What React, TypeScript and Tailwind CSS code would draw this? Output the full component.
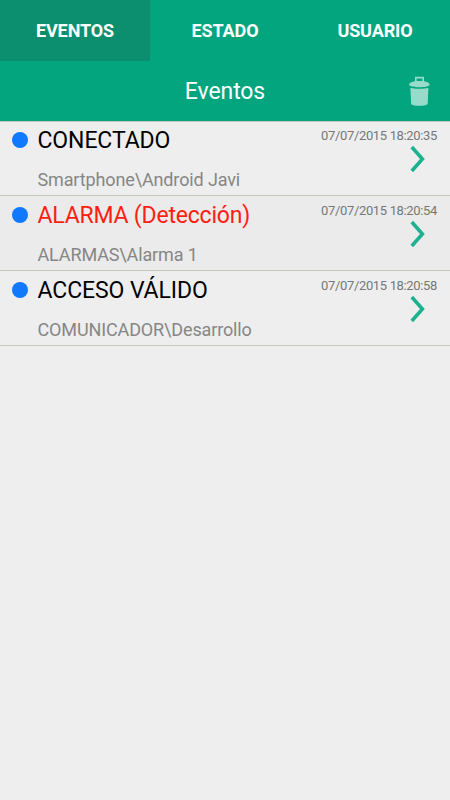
import { clsx } from 'clsx';

type TEvent = {
  title: string;
  source: string;
  date: string;
  isAlarm?: boolean;
};

const TABS = ['EVENTOS', 'ESTADO', 'USUARIO'];

const EVENTS: TEvent[] = [
  {
    title: 'CONECTADO',
    source: 'Smartphone\\Android Javi',
    date: '07/07/2015 18:20:35',
  },
  {
    title: 'ALARMA (Detección)',
    source: 'ALARMAS\\Alarma 1',
    date: '07/07/2015 18:20:54',
    isAlarm: true,
  },
  {
    title: 'ACCESO VÁLIDO',
    source: 'COMUNICADOR\\Desarrollo',
    date: '07/07/2015 18:20:58',
  },
];

function TrashIcon() {
  return (
    <svg width="22" height="30" viewBox="0 0 22 30" fill="#99dbca">
      <path
        fillRule="evenodd"
        d="M7 0.8H16V5.2C19.2 5.6 21.6 6.8 21.6 8.4C21.6 10.2 17 11.2 11.4 11.2S1.2 10.2 1.2 8.4C1.2 6.8 3.6 5.6 7 5.2ZM8.6 2.6V5H14.4V2.6Z"
      />
      <path d="M2.4 11.7C4.6 12.5 7.6 12.8 11.4 12.8S18.2 12.5 20.4 11.7L19.7 27.4C19.6 29 15.9 29.8 11.4 29.8S3.2 29 3.1 27.4Z" />
    </svg>
  );
}

function Chevron() {
  return (
    <svg width="16" height="26" viewBox="0 0 16 26" fill="none">
      <path d="M1.8 1L12.4 13L1.8 25" stroke="#1db28f" strokeWidth="3.6" />
    </svg>
  );
}

function EventRow({ event, shaded }: { event: TEvent; shaded: boolean }) {
  return (
    <li
      className={clsx(
        'flex h-[75px] border-b border-[#c6c6bd] pl-3 pr-[13px]',
        shaded ? 'bg-[#ebebeb]' : 'bg-[#eeeeee]',
      )}
    >
      <span className="mt-[11px] size-4 shrink-0 rounded-full bg-[#1079ff]" />
      <div className="ml-[9.5px] flex flex-1 flex-col pt-[6px] whitespace-nowrap">
        <span
          className={clsx(
            'text-[23px] leading-[28px]',
            event.isAlarm ? 'tracking-[-0.2px] text-[#ff1d12]' : 'tracking-[-0.1px] text-black',
          )}
        >
          {event.title}
        </span>
        <span className="mt-[15px] text-[18px] leading-[20px] tracking-[-0.13px] text-[#868686]">
          {event.source}
        </span>
      </div>
      <div className="flex flex-col items-end pt-[7px]">
        <span className="text-[13px] leading-4 tracking-[-0.35px] text-[#777777]">{event.date}</span>
        <span className="mt-[2px] mr-[11px]">
          <Chevron />
        </span>
      </div>
    </li>
  );
}

export default function App() {
  return (
    <div className="min-h-screen bg-[#eeeeee] font-['Roboto',sans-serif]">
      <header className="relative bg-[#02a57e] text-white shadow-[0_1px_0_#c6c6bd]">
        <nav className="grid h-[61px] grid-cols-3">
          {TABS.map((tab, index) => (
            <button
              key={tab}
              className={clsx(
                'text-[18px] font-bold tracking-[-0.1px]',
                index === 0 && 'bg-[#0b8f6e]',
              )}
            >
              {tab}
            </button>
          ))}
        </nav>
        <div className="grid h-[60px] grid-cols-[1fr_auto_1fr] items-center">
          <h1 className="col-start-2 pt-0.5 text-[23px] leading-7 tracking-[-0.1px]">Eventos</h1>
          <button className="mr-5 justify-self-end">
            <TrashIcon />
          </button>
        </div>
      </header>
      <ul>
        {EVENTS.map((event, index) => (
          <EventRow key={event.date} event={event} shaded={index % 2 === 1} />
        ))}
      </ul>
    </div>
  );
}
